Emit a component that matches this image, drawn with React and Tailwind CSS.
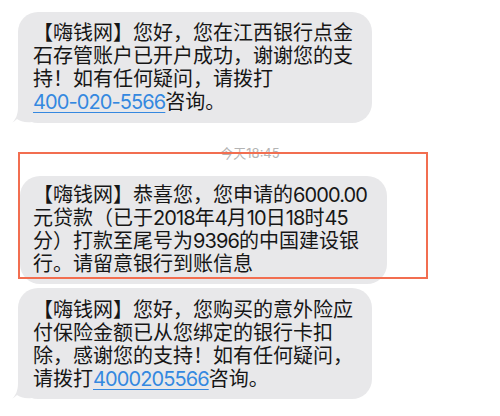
import React from "react";

const FONT = { fontFamily: 'Inter, "Noto Sans CJK SC", "Noto Sans", sans-serif' };

function Tail() {
  return (
    <svg
      className="absolute left-[-6px] bottom-0"
      width="22"
      height="20"
      viewBox="0 0 22 20"
    >
      <path d="M6 0 L14 0 L14 12 C15 15 17 17 20 19 C13 20 8 18 5 16 C3 18 1 19 0 20 C4 16 6 11 6 4 Z" fill="#e8e8ea" />
    </svg>
  );
}

function N({ children }) {
  return <span className="tracking-[-0.9px]">{children}</span>;
}

function Link({ children }) {
  return (
    <span className="text-[#3488e0] underline decoration-[#3488e0] decoration-1 underline-offset-[3px] tracking-[-0.9px]">
      {children}
    </span>
  );
}

function Bubble({ lines, className, tail }) {
  return (
    <div className={"relative rounded-[20px] bg-[#e8e8ea] text-[20px] leading-[23px] text-[#161616] " + className}>
      {tail && <Tail />}
      {lines.map((l, i) => (
        <div key={i} className="relative whitespace-nowrap">
          {l}
        </div>
      ))}
    </div>
  );
}

export default function App() {
  return (
    <div className="relative w-[500px] h-[416px] overflow-hidden bg-white" style={FONT}>
      <div className="flex flex-col pt-[12px]">
        <Bubble
          tail
          className="ml-[18px] w-[354px] pl-[15px] pt-[10px] pb-[9px]"
          lines={[
            "【嗨钱网】您好，您在江西银行点金",
            "石存管账户已开户成功，谢谢您的支",
            "持！如有任何疑问，请拨打",
            <>
              <Link>400-020-5566</Link>咨询。
            </>,
          ]}
        />
        <div className="mt-[22px] text-center text-[13px] leading-[16px] text-[#b4b4b4]">
          今天18:45
        </div>
        <Bubble
          className="mt-[15px] ml-[20px] w-[367px] pl-[13px] pt-[8px] pb-[8px]"
          lines={[
            <>【嗨钱网】恭喜您，您申请的<N>6000.00</N></>,
            <>元贷款（已于<N>2018</N>年<N>4</N>月<N>10</N>日<N>18</N>时<N>45</N></>,
            <>分）打款至尾号为<N>9396</N>的中国建设银</>,
            "行。请留意银行到账信息",
          ]}
        />
        <Bubble
          tail
          className="mt-[4px] ml-[18px] w-[354px] pl-[15px] pt-[11px] pb-[8px]"
          lines={[
            "【嗨钱网】您好，您购买的意外险应",
            "付保险金额已从您绑定的银行卡扣",
            "除，感谢您的支持！如有任何疑问，",
            <>
              请拨打<Link>4000205566</Link>咨询。
            </>,
          ]}
        />
      </div>
      <div className="absolute left-[18px] top-[152px] w-[410px] h-[127px] border-2 border-[#f26e50]" />
    </div>
  );
}
